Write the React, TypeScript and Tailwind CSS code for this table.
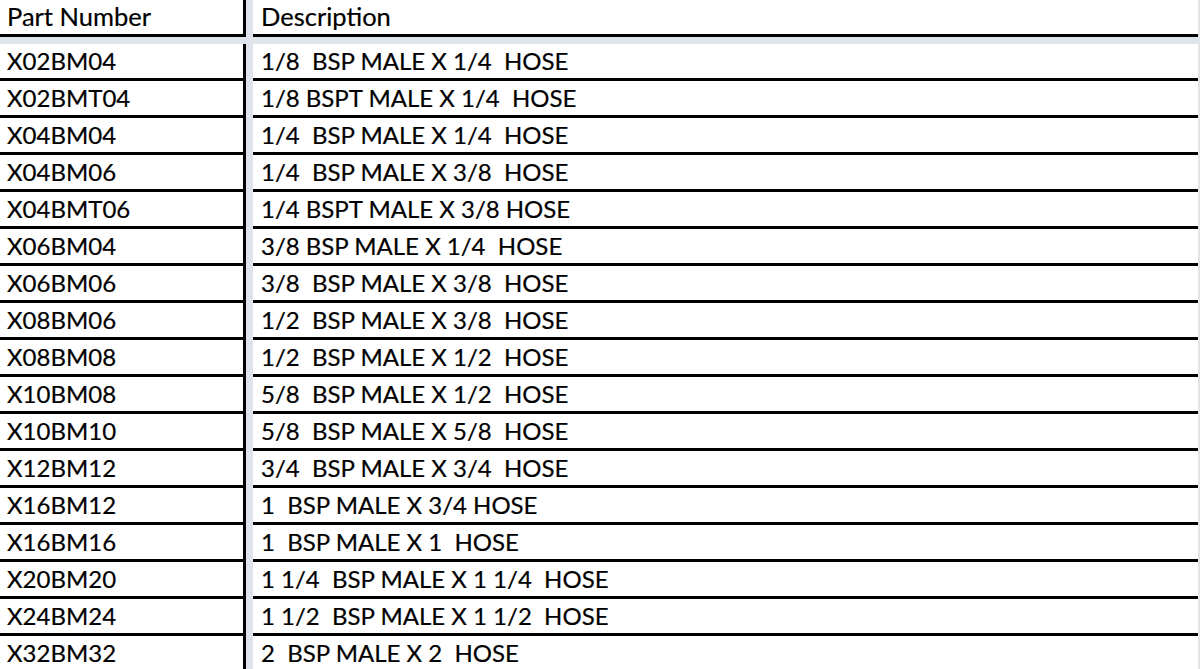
import React from 'react';

// Part number / description table

const rows: [string, string][] = [
  ['X02BM04', '1/8  BSP MALE X 1/4  HOSE'],
  ['X02BMT04', '1/8 BSPT MALE X 1/4  HOSE'],
  ['X04BM04', '1/4  BSP MALE X 1/4  HOSE'],
  ['X04BM06', '1/4  BSP MALE X 3/8  HOSE'],
  ['X04BMT06', '1/4 BSPT MALE X 3/8 HOSE'],
  ['X06BM04', '3/8 BSP MALE X 1/4  HOSE'],
  ['X06BM06', '3/8  BSP MALE X 3/8  HOSE'],
  ['X08BM06', '1/2  BSP MALE X 3/8  HOSE'],
  ['X08BM08', '1/2  BSP MALE X 1/2  HOSE'],
  ['X10BM08', '5/8  BSP MALE X 1/2  HOSE'],
  ['X10BM10', '5/8  BSP MALE X 5/8  HOSE'],
  ['X12BM12', '3/4  BSP MALE X 3/4  HOSE'],
  ['X16BM12', '1  BSP MALE X 3/4 HOSE'],
  ['X16BM16', '1  BSP MALE X 1  HOSE'],
  ['X20BM20', '1 1/4  BSP MALE X 1 1/4  HOSE'],
  ['X24BM24', '1 1/2  BSP MALE X 1 1/2  HOSE'],
  ['X32BM32', '2  BSP MALE X 2  HOSE'],
];

function Row({ part, desc, head }: { part: string; desc: string; head?: boolean }) {
  const size = head ? 'text-[25.5px]' : 'text-[24px]';
  return (
    <div className={`flex h-[37px] ${size}`}>
      <div className="w-[243px] border-b-[3px] border-black pl-[7px] flex items-center whitespace-pre">
        {part}
      </div>
      <div className="w-[3px] bg-black" />
      <div className="w-[7px] bg-[#dfe3ec]" />
      <div className="flex-1 border-b-[3px] border-black pl-[8px] flex items-center whitespace-pre">
        {desc}
      </div>
      <div className="w-[2px] bg-[#e4e4e4]" />
    </div>
  );
}

export default function App() {
  return (
    <div
      className="w-[1200px] h-[669px] overflow-hidden bg-white text-black leading-none [-webkit-text-stroke:0.2px_black]"
      style={{ fontFamily: 'Lato, "Open Sans", sans-serif' }}
    >
      <Row part="Part Number" desc="Description" head />
      <div className="h-[7px] bg-[#dfe3ec]" />
      {rows.map(([p, d]) => (
        <Row key={p} part={p} desc={d} />
      ))}
    </div>
  );
}
